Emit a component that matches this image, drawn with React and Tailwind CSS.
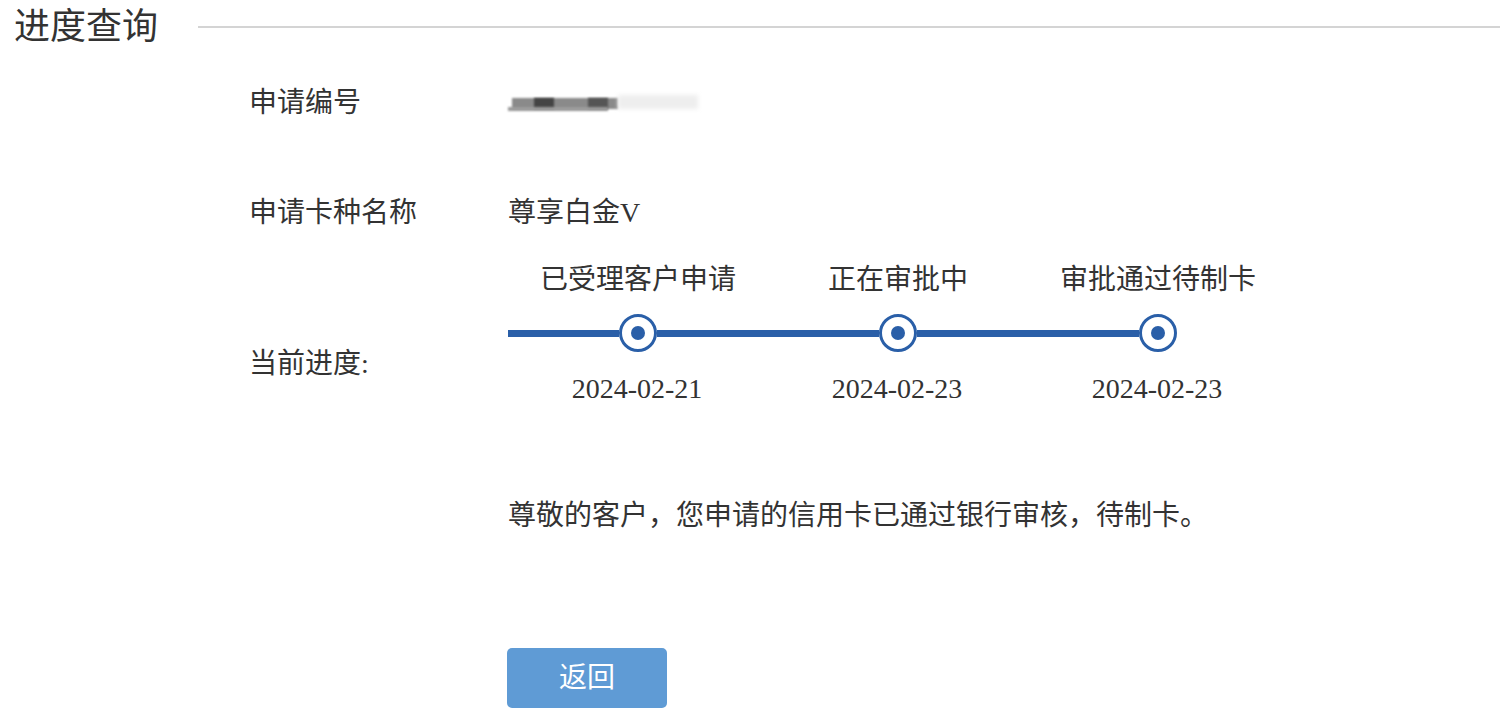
import React from 'react';

const font = { fontFamily: '"Liberation Serif", "Noto Sans CJK SC", serif' };

const steps = [
  { title: '已受理客户申请', date: '2024-02-21' },
  { title: '正在审批中', date: '2024-02-23' },
  { title: '审批通过待制卡', date: '2024-02-23' },
];

const Step = ({ title, date, last }) => (
  <div className="w-[260px] flex flex-col items-center">
    <div className="h-9 leading-9 text-[28px] whitespace-nowrap">{title}</div>
    <div className="mt-4 w-full flex items-center h-[38px]">
      <div className="flex-1 h-[7px] bg-[#2a5fa8]" />
      <div className="w-[38px] h-[38px] rounded-full border-[3px] border-[#2a5fa8] bg-white flex items-center justify-center shrink-0">
        <div className="w-[14px] h-[14px] rounded-full bg-[#2a5fa8]" />
      </div>
      <div className={`flex-1 h-[7px] ${last ? 'bg-transparent' : 'bg-[#2a5fa8]'}`} />
    </div>
    <div className="mt-[19px] h-9 leading-9 text-[28px] -ml-[2px]">{date}</div>
  </div>
);

export default function App() {
  return (
    <div className="w-[1500px] h-[720px] bg-white text-[#333] overflow-hidden" style={font}>
      <div className="flex items-center h-[54px]">
        <div className="pl-[14px] text-[36px] leading-[54px] text-[#333]">进度查询</div>
        <div className="ml-[40px] flex-1 h-[2px] bg-[#d4d4d4]" />
      </div>

      <div className="pl-[249px]">
        <div className="mt-[29px] flex items-center h-10">
          <div className="w-[259px] text-[28px]">申请编号</div>
          <div className="relative w-[190px] h-10">
            <div className="absolute left-[4px] top-[15px] w-[106px] h-[11px] bg-[#8a8a8a] blur-[1px]" />
            <div className="absolute left-[26px] top-[15px] w-[20px] h-[11px] bg-[#444] blur-[1px]" />
            <div className="absolute left-[80px] top-[15px] w-[20px] h-[11px] bg-[#555] blur-[1px]" />
            <div className="absolute left-[110px] top-[12px] w-[80px] h-[14px] bg-[#eee] blur-[2px]" />
            <div className="absolute left-0 top-[24px] w-[100px] h-[4px] bg-[#999] blur-[1px]" />
          </div>
        </div>

        <div className="mt-[70px] flex items-center h-10">
          <div className="w-[259px] text-[28px]">申请卡种名称</div>
          <div className="text-[28px]">尊享白金V</div>
        </div>

        <div className="mt-[29px] flex">
          <div className="w-[259px] text-[28px] h-9 leading-9 mt-[84px]">当前进度:</div>
          <div className="flex">
            {steps.map((s, i) => (
              <Step key={i} {...s} last={i === steps.length - 1} />
            ))}
          </div>
        </div>

        <div className="ml-[259px] mt-[91px] h-9 leading-9 text-[28px]">
          尊敬的客户，您申请的信用卡已通过银行审核，待制卡。
        </div>

        <div className="ml-[258px] mt-[114px]">
          <button className="w-[160px] h-[60px] rounded-[5px] bg-[#5f9bd5] text-white text-[28px]">返回</button>
        </div>
      </div>
    </div>
  );
}
